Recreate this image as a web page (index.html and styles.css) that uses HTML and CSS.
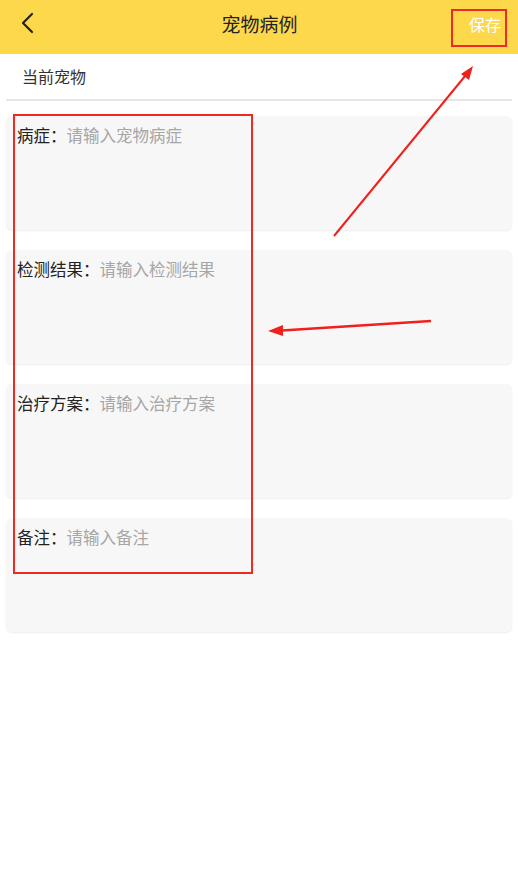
FILE: index.html
```html
<!DOCTYPE html>
<html>
  <head>
    <meta charset="utf-8">
    <link rel="stylesheet" href="styles.css">
  </head>
  <body>
    <div class="topbar">
      <div class="back">
        <svg width="14" height="22" viewBox="0 0 14 22">
          <path d="M12 2 L3 11 L12 20" fill="none" stroke="#222" stroke-width="2.2" stroke-linecap="round" stroke-linejoin="round"/>
        </svg>
      </div>
      <div class="title">宠物病例</div>
      <div class="save">保存</div>
    </div>

    <div class="pet-row">当前宠物</div>

    <div class="cards">
      <div class="card"><span class="label">病症：</span><span class="hint">请输入宠物病症</span></div>
      <div class="card"><span class="label">检测结果：</span><span class="hint">请输入检测结果</span></div>
      <div class="card"><span class="label">治疗方案：</span><span class="hint">请输入治疗方案</span></div>
      <div class="card"><span class="label">备注：</span><span class="hint">请输入备注</span></div>
    </div>

    <!-- red annotation marks drawn over the screenshot -->
    <div class="mark mark-save"></div>
    <div class="mark mark-fields"></div>
    <svg class="arrows" width="518" height="890">
      <line x1="334" y1="236" x2="470" y2="70" stroke="#f0201c" stroke-width="2"/>
      <path d="M473 66 L461 74 L469 80 Z" fill="#f0201c"/>
      <line x1="431" y1="321" x2="274" y2="331" stroke="#f0201c" stroke-width="2.5"/>
      <path d="M268 331 L283 325 L283 336 Z" fill="#f0201c"/>
    </svg>
  </body>
</html>
```

FILE: styles.css
```css
body {
  margin: 0;
  background: #fff;
  font-family: "Noto Sans CJK SC", "Noto Sans", sans-serif;
  position: relative;
  width: 518px;
  height: 890px;
  overflow: hidden;
}

.topbar {
  height: 54px;
  background: #fdd84b;
  display: flex;
  align-items: center;
  padding: 0 12px 0 20px;
}

.back {
  width: 40px;
  display: flex;
  align-items: center;
  margin-top: -8px;
}

.title {
  flex: 1;
  text-align: center;
  font-size: 19px;
  color: #222;
  margin-top: -8px;
  padding-left: 14px;
}

.save {
  width: 56px;
  text-align: right;
  font-size: 16px;
  color: #fff;
  margin-top: -6px;
  padding-right: 5px;
}

.pet-row {
  margin: 0 6px;
  height: 45px;
  line-height: 44px;
  padding-left: 16px;
  font-size: 16px;
  color: #333;
  border-bottom: 2px solid #e6e6e6;
}

.cards {
  padding: 15px 6px 0;
  display: flex;
  flex-direction: column;
  gap: 20px;
}

.card {
  height: 114px;
  background: #f7f7f7;
  border-radius: 6px;
  box-shadow: 0 1px 2px rgba(0, 0, 0, 0.08);
  padding: 7px 11px;
  box-sizing: border-box;
  font-size: 16.5px;
  line-height: 24px;
}

.label {
  color: #222;
}

.hint {
  color: #a6a6a6;
}

.mark {
  position: absolute;
  border: 2px solid #ee2a24;
  box-sizing: border-box;
}

.mark-save {
  left: 451px;
  top: 9px;
  width: 56px;
  height: 38px;
}

.mark-fields {
  left: 13px;
  top: 114px;
  width: 240px;
  height: 460px;
}

.arrows {
  position: absolute;
  left: 0;
  top: 0;
}
```
